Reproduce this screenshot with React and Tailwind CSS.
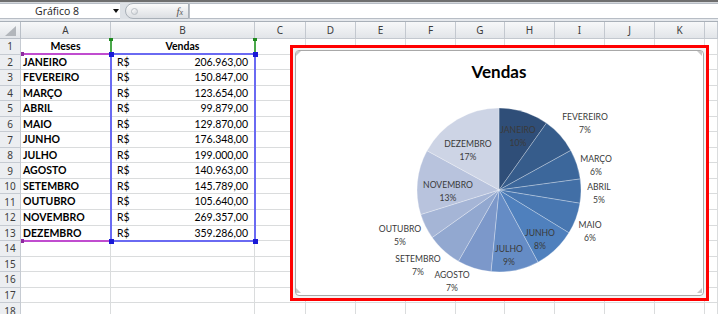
import React from "react";

const data = [
  ["JANEIRO", "206.963,00", 206963],
  ["FEVEREIRO", "150.847,00", 150847],
  ["MARÇO", "123.654,00", 123654],
  ["ABRIL", "99.879,00", 99879],
  ["MAIO", "129.870,00", 129870],
  ["JUNHO", "176.348,00", 176348],
  ["JULHO", "199.000,00", 199000],
  ["AGOSTO", "140.963,00", 140963],
  ["SETEMBRO", "145.789,00", 145789],
  ["OUTUBRO", "105.640,00", 105640],
  ["NOVEMBRO", "269.357,00", 269357],
  ["DEZEMBRO", "359.286,00", 359286],
];

const sliceColors = [
  "#2f4e78",
  "#365c8b",
  "#3c679b",
  "#426fa6",
  "#4877b1",
  "#4f80bd",
  "#658cc5",
  "#7c98ca",
  "#92a8d0",
  "#a5b5d6",
  "#b8c3dd",
  "#cdd4e5",
];

const labels = [
  ["JANEIRO", "10%", 518, 130],
  ["FEVEREIRO", "7%", 585, 117],
  ["MARÇO", "6%", 596, 159],
  ["ABRIL", "5%", 599, 187],
  ["MAIO", "6%", 590, 225],
  ["JUNHO", "8%", 540, 233],
  ["JULHO", "9%", 509, 249],
  ["AGOSTO", "7%", 452, 275],
  ["SETEMBRO", "7%", 418, 259],
  ["OUTUBRO", "5%", 400, 229],
  ["NOVEMBRO", "13%", 448, 185],
  ["DEZEMBRO", "17%", 468, 144],
];

const cols = ["A", "B", "C", "D", "E", "F", "G", "H", "I", "J", "K", ""];
const gridCols =
  "grid grid-cols-[21px_90px_144px_51px_50px_50px_50px_49px_50px_50px_50px_50px_13px]";

function PieSlices() {
  const total = data.reduce((s, d) => s + d[2], 0);
  const cx = 499;
  const cy = 190;
  const r = 82;
  let acc = 0;
  return data.map((d, i) => {
    const a0 = (acc / total) * 2 * Math.PI;
    acc += d[2];
    const a1 = (acc / total) * 2 * Math.PI;
    const x0 = cx + r * Math.sin(a0);
    const y0 = cy - r * Math.cos(a0);
    const x1 = cx + r * Math.sin(a1);
    const y1 = cy - r * Math.cos(a1);
    const large = a1 - a0 > Math.PI ? 1 : 0;
    return (
      <path
        key={i}
        d={`M${cx},${cy} L${x0},${y0} A${r},${r} 0 ${large} 1 ${x1},${y1} Z`}
        fill={sliceColors[i]}
        stroke="#ffffff"
        strokeOpacity="0.4"
        strokeWidth="0.7"
      />
    );
  });
}

function FormulaBar() {
  return (
    <div className="h-[22px] flex flex-col bg-[#dde1e6]">
      <div className="h-[2px] bg-[#6e6e6e]" />
      <div className="h-[1px] bg-[#d4d7db]" />
      <div className="flex h-[16px]">
        <div className="w-[120px] bg-white border-y border-[#b7bdc5] flex items-center pl-[35px] pr-[1px]">
          <span className="flex-1 text-[10.5px] leading-none text-[#222] font-['Open_Sans']">
            Gráfico 8
          </span>
          <span className="w-0 h-0 border-l-[3px] border-r-[3px] border-t-[4px] border-l-transparent border-r-transparent border-t-[#111]" />
        </div>
        <div className="w-[5px]" />
        <div className="w-[64px] h-[16px] rounded-l-full border border-[#a9b0b8] bg-gradient-to-b from-[#fbfbfb] to-[#dcdfe3] flex items-center pl-[5px] pr-[5px] justify-between">
          <span className="w-[7px] h-[7px] rounded-full border border-[#b9bec4] bg-gradient-to-br from-white to-[#cfd3d8]" />
          <span className="text-[11px] italic text-[#555] font-['Liberation_Serif'] leading-none">
            f<span className="text-[8px]">x</span>
          </span>
        </div>
        <div className="flex-1 bg-white border-y border-l border-[#b7bdc5]" />
      </div>
      <div className="h-[3px] bg-[#e6e9ed] border-b border-[#a9b0b8]" />
    </div>
  );
}

function HeaderRow() {
  return (
    <div className={`${gridCols} h-[17px]`}>
      <div className="bg-gradient-to-b from-[#f7f8f9] to-[#e2e5e9] border-r border-b border-[#b9bfc7] flex items-end justify-end pr-[4px] pb-[2px]">
        <svg width="11" height="10" viewBox="0 0 11 10">
          <polygon points="11,0 11,10 0,10" fill="#b2b6bb" />
        </svg>
      </div>
      {cols.map((c, i) => (
        <div
          key={i}
          className="bg-gradient-to-b from-[#f7f8f9] to-[#e2e5e9] border-r border-b border-[#c3c8cf] flex items-center justify-center text-[10px] text-[#3c3c3c] font-['Noto_Sans']"
        >
          {c}
        </div>
      ))}
    </div>
  );
}

function Cell({ children, className = "" }) {
  return (
    <div className={`border-r border-b border-[#dadcdd] flex items-center overflow-hidden whitespace-nowrap ${className}`}>
      {children}
    </div>
  );
}

function RowHead({ n }) {
  return (
    <div className="bg-[#eceef1] border-r border-b border-[#c6cbd2] flex items-center justify-center text-[10px] text-[#3c3c3c] font-['Noto_Sans']">
      {n}
    </div>
  );
}

function Empties({ count }) {
  return Array.from({ length: count }).map((_, i) => <Cell key={i} />);
}

function Sheet() {
  const rows = [];
  rows.push(
    <React.Fragment key="r1">
      <RowHead n={1} />
      <Cell className="justify-center font-bold">Meses</Cell>
      <Cell className="justify-center font-bold">Vendas</Cell>
      <Empties count={10} />
    </React.Fragment>
  );
  data.forEach((d, i) => {
    rows.push(
      <React.Fragment key={`d${i}`}>
        <RowHead n={i + 2} />
        <Cell className="pl-[2px] font-bold">{d[0]}</Cell>
        <Cell className="justify-between pl-[6px] pr-[6px]">
          <span>R$</span>
          <span>{d[1]}</span>
        </Cell>
        <Empties count={10} />
      </React.Fragment>
    );
  });
  for (let n = 14; n <= 18; n++) {
    rows.push(
      <React.Fragment key={`e${n}`}>
        <RowHead n={n} />
        <Empties count={12} />
      </React.Fragment>
    );
  }
  return (
    <div className={`${gridCols} auto-rows-[15.55px] text-[10.5px] text-black font-['Lato'] leading-none`}>
      {rows}
    </div>
  );
}

function Chart() {
  return (
    <div className="absolute left-[290px] top-[45px] w-[419px] h-[256px] border-[3px] border-[#ff0000] bg-[#f4f4f4] p-[2px] flex">
      <div className="relative flex-1 border border-[#a8a8a8] rounded-[4px] bg-white">
        <svg
          className="absolute left-[-3px] top-[-3px]"
          width="413"
          height="250"
          viewBox="293 48 413 250"
        >
          <text
            x="499"
            y="78"
            textAnchor="middle"
            fontFamily="Lato"
            fontWeight="700"
            fontSize="17"
            fill="#000"
          >
            Vendas
          </text>
          <PieSlices />
          {labels.map(([name, pct, x, y], i) => (
            <g key={i} fontFamily="Lato" fontSize="8.6" fill="#3a3a3a" textAnchor="middle">
              <text x={x} y={y + 3}>
                {name}
              </text>
              <text x={x} y={y + 16}>
                {pct}
              </text>
            </g>
          ))}
          <polygon points="702,51 702,56 697,51" fill="#c8c8c8" />
          <polygon points="296,293 301,293 296,288" fill="#c8c8c8" />
          <polygon points="702,293 697,293 702,288" fill="#c8c8c8" />
          <polygon points="296,51 301,51 296,56" fill="#c8c8c8" />
        </svg>
      </div>
    </div>
  );
}

function RangeMarks() {
  return (
    <>
      <div className="absolute left-[110px] top-[39px] w-[2px] h-[15px] bg-[#4aa84a]" />
      <div className="absolute left-[254px] top-[39px] w-[2px] h-[15px] bg-[#4aa84a]" />
      <div className="absolute left-[109px] top-[38px] w-[4px] h-[3px] bg-[#1f8a1f]" />
      <div className="absolute left-[253px] top-[38px] w-[4px] h-[3px] bg-[#1f8a1f]" />
      <div className="absolute left-[21px] top-[53px] w-[90px] h-[2px] bg-[#c04ccf]" />
      <div className="absolute left-[21px] top-[240px] w-[90px] h-[2px] bg-[#c04ccf]" />
      <div className="absolute left-[110px] top-[53px] w-[146px] h-[189px] border-2 border-[#6a6af2]" />
      <div className="absolute left-[21px] top-[52px] w-[3px] h-[4px] bg-[#8e2a9e]" />
      <div className="absolute left-[21px] top-[239px] w-[3px] h-[4px] bg-[#8e2a9e]" />
      <div className="absolute left-[109px] top-[52px] w-[5px] h-[5px] bg-[#1a1ad6]" />
      <div className="absolute left-[253px] top-[52px] w-[5px] h-[5px] bg-[#1a1ad6]" />
      <div className="absolute left-[109px] top-[239px] w-[5px] h-[5px] bg-[#1a1ad6]" />
      <div className="absolute left-[253px] top-[239px] w-[5px] h-[5px] bg-[#1a1ad6]" />
    </>
  );
}

export default function App() {
  return (
    <div className="relative w-[718px] h-[314px] overflow-hidden bg-white">
      <FormulaBar />
      <HeaderRow />
      <Sheet />
      <RangeMarks />
      <Chart />
    </div>
  );
}
